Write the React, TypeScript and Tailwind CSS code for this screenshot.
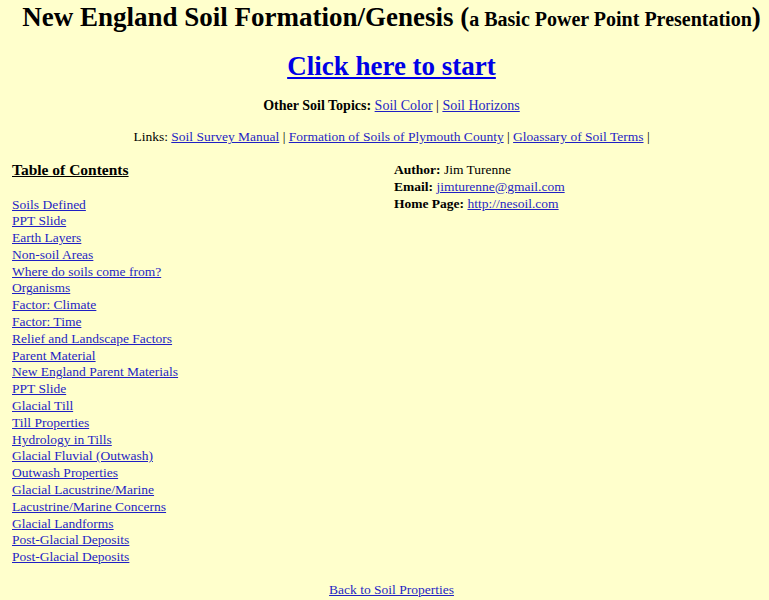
import React from 'react';

const toc = [
  'Soils Defined',
  'PPT Slide',
  'Earth Layers',
  'Non-soil Areas',
  'Where do soils come from?',
  'Organisms',
  'Factor: Climate',
  'Factor: Time',
  'Relief and Landscape Factors',
  'Parent Material',
  'New England Parent Materials',
  'PPT Slide',
  'Glacial Till',
  'Till Properties',
  'Hydrology in Tills',
  'Glacial Fluvial (Outwash)',
  'Outwash Properties',
  'Glacial Lacustrine/Marine',
  'Lacustrine/Marine Concerns',
  'Glacial Landforms',
  'Post-Glacial Deposits',
  'Post-Glacial Deposits',
];

const Link = ({ children }: { children: React.ReactNode }) => (
  <a href="#" className="text-[#1f1fc4] underline">{children}</a>
);

export default function App() {
  return (
    <div
      className="h-[600px] w-full overflow-hidden bg-[#ffffcc] text-black"
      style={{ fontFamily: '"Liberation Serif", "Times New Roman", serif' }}
    >
      {/* Title */}
      <h1 className="pl-[14px] text-center font-bold leading-[34px] text-[27px] whitespace-nowrap">
        New England Soil Formation/Genesis (<span className="text-[20px]">a Basic Power Point Presentation</span>)
      </h1>

      <div className="mt-[15px] pl-[14px] text-center leading-[30px]">
        <a href="#" className="text-[27px] font-bold text-[#0000e6] underline">Click here to start</a>
      </div>

      <p className="mt-[12px] pl-[14px] text-center text-[14px] leading-[18px]">
        <b>Other Soil Topics:</b> <Link>Soil Color</Link> | <Link>Soil Horizons</Link>
      </p>

      <p className="mt-[13px] pl-[14px] text-center text-[13.5px] leading-[18px]">
        Links: <Link>Soil Survey Manual</Link> | <Link>Formation of Soils of Plymouth County</Link> |{' '}
        <Link>Gloassary of Soil Terms</Link> |
      </p>

      <div className="mt-[15px] grid grid-cols-[394px_1fr]">
        <div className="pl-[12px]">
          <h2 className="text-[15.5px] font-bold leading-[18px] underline">Table of Contents</h2>
          <ul className="mt-[17.5px] text-[13.5px] leading-[16.8px]">
            {toc.map((t, i) => (
              <li key={i}>
                <Link>{t}</Link>
              </li>
            ))}
          </ul>
        </div>
        <div className="pt-[1px] text-[13.5px] leading-[16.8px]">
          <div><b>Author:</b> Jim Turenne</div>
          <div><b>Email:</b> <Link>jimturenne@gmail.com</Link></div>
          <div><b>Home Page:</b> <Link>http://nesoil.com</Link></div>
        </div>
      </div>

      <p className="mt-[16px] pl-[14px] text-center text-[13.5px] leading-[16.8px]">
        <Link>Back to Soil Properties</Link>
      </p>
    </div>
  );
}
